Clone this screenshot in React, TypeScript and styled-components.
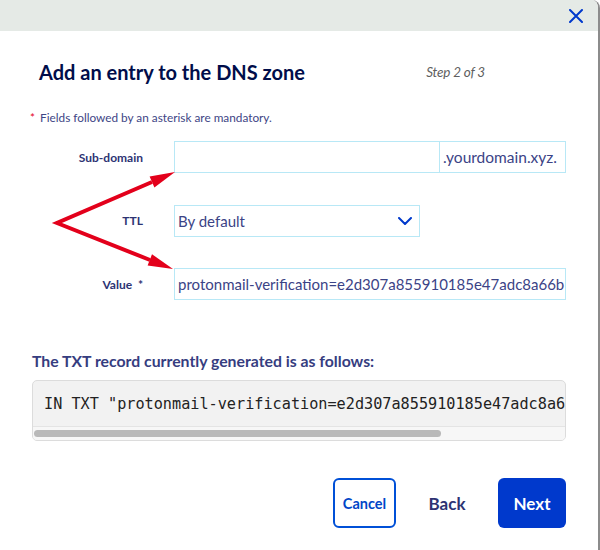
import { FC } from 'react'
import styled, { createGlobalStyle } from 'styled-components'

const GlobalStyle = createGlobalStyle`
  html, body {
    margin: 0;
    padding: 0;
    background: #ffffff;
  }
  body {
    font-family: Lato, 'Open Sans', sans-serif;
  }
`

const navy = '#2d3373'
const blue = '#0039cc'
const fieldBorder = '#b8e8f6'

const Page = styled.div`
  position: relative;
  width: 600px;
  height: 550px;
  overflow: hidden;
`

const Dialog = styled.div`
  box-sizing: border-box;
  width: 600px;
  height: 550px;
  border-right: 2px solid #8c8c8c;
  border-top-right-radius: 8px;
  background: #fff;
  overflow: hidden;
  display: flex;
  flex-direction: column;
`

const Header = styled.div`
  height: 31px;
  background: #e5eae6;
  display: flex;
  justify-content: flex-end;
  align-items: center;
  padding-right: 13px;
`

const CloseButton = styled.button`
  border: 0;
  background: none;
  padding: 0;
  width: 18px;
  height: 18px;
  display: flex;
  align-items: center;
  justify-content: center;
  cursor: pointer;
`

const Body = styled.div`
  padding: 29px 32px 0 32px;
  display: flex;
  flex-direction: column;
`

const TitleRow = styled.div`
  display: flex;
  justify-content: space-between;
  align-items: center;
  padding: 0 81px 0 7px;
  height: 24px;

  h1 {
    margin: 0;
    font-size: 20px;
    font-weight: 700;
    color: #000d4a;
  }
  span {
    font-size: 13.5px;
    font-style: italic;
    color: #5f5f5f;
    letter-spacing: -0.2px;
  }
`

const Mandatory = styled.p`
  margin: 27px 0 0 -2px;
  font-size: 11.8px;
  line-height: 14px;
  color: #3e4585;

  em {
    font-style: normal;
    color: #e3001b;
    margin-right: 2px;
  }
`

const Form = styled.div`
  margin-top: 16px;
  margin-left: -32px;
  display: grid;
  grid-template-columns: 143px 1fr;
  column-gap: 31px;
  row-gap: 31.5px;
  align-items: center;
`

const Label = styled.label`
  text-align: right;
  font-size: 12px;
  font-weight: 700;
  color: ${navy};
`

const Field = styled.div<{ $width?: number }>`
  box-sizing: border-box;
  height: 32px;
  width: ${(p) => (p.$width ? `${p.$width}px` : '100%')};
  border: 1px solid ${fieldBorder};
  display: flex;
  align-items: stretch;
  overflow: hidden;
  font-size: 15px;
  color: #3b4386;
`

const FieldText = styled.div`
  flex: 1;
  min-width: 0;
  display: flex;
  align-items: center;
  padding-left: 3px;
  white-space: nowrap;
  overflow: hidden;
`

const Suffix = styled.div`
  width: 126px;
  border-left: 1px solid ${fieldBorder};
  display: flex;
  align-items: center;
  padding-left: 3px;
  box-sizing: border-box;
  font-size: 15.5px;
  color: #3b4386;
`

const Chevron = styled.div`
  width: 14px;
  display: flex;
  align-items: center;
  justify-content: center;
  margin-right: 7px;
`

const TxtHeading = styled.h2`
  margin: 52px 0 0 0;
  font-size: 15.8px;
  line-height: 18px;
  font-weight: 700;
  color: #363d80;
`

const CodeBox = styled.div`
  box-sizing: border-box;
  margin-top: 10px;
  height: 61px;
  border: 1px solid #dcdcdc;
  border-radius: 5px;
  background: #f2f2f2;
  overflow: hidden;
  display: flex;
  flex-direction: column;
`

const Code = styled.pre`
  margin: 0;
  padding: 13px 0 0 11px;
  height: 45px;
  box-sizing: border-box;
  font-family: 'DejaVu Sans Mono', monospace;
  font-size: 15.2px;
  line-height: 20px;
  color: #222;
  white-space: nowrap;
  overflow: hidden;
`

const ScrollTrack = styled.div`
  flex: 1;
  border-top: 1px solid #e4e4e4;
  background: #f7f7f7;
  padding: 3px 1px;
  box-sizing: border-box;
`

const ScrollThumb = styled.div`
  height: 7px;
  border-radius: 4px;
  background: #b9b9b9;
`

const Actions = styled.div`
  margin-top: 37px;
  display: flex;
  justify-content: flex-end;
  align-items: center;
`

const Button = styled.button<{ $variant: 'outline' | 'ghost' | 'primary' }>`
  box-sizing: border-box;
  height: 50px;
  border-radius: 6px;
  font-family: inherit;
  font-weight: 700;
  cursor: pointer;
  ${(p) =>
    p.$variant === 'outline'
      ? `
    width: 63px;
    border: 2px solid #0050d7;
    background: #fff;
    color: #0046c8;
    font-size: 14.5px;
  `
      : p.$variant === 'ghost'
      ? `
    width: 102px;
    border: 0;
    background: none;
    color: ${navy};
    font-size: 17px;
  `
      : `
    width: 68px;
    border: 0;
    background: ${blue};
    color: #fff;
    font-size: 17px;
  `}
`

const Annotation = styled.svg`
  position: absolute;
  left: 0;
  top: 0;
  pointer-events: none;
`

const App: FC = () => {
  return (
    <Page>
      <GlobalStyle />
      <Dialog>
        <Header>
          <CloseButton aria-label="Close">
            <svg width="14" height="14" viewBox="0 0 14 14">
              <path
                d="M1 1 L13 13 M13 1 L1 13"
                stroke={blue}
                strokeWidth="2"
                strokeLinecap="round"
              />
            </svg>
          </CloseButton>
        </Header>
        <Body>
          <TitleRow>
            <h1>Add an entry to the DNS zone</h1>
            <span>Step 2 of 3</span>
          </TitleRow>
          <Mandatory>
            <em>*</em> Fields followed by an asterisk are mandatory.
          </Mandatory>
          <Form>
            <Label>Sub-domain</Label>
            <Field>
              <FieldText />
              <Suffix>.yourdomain.xyz.</Suffix>
            </Field>
            <Label>TTL</Label>
            <Field $width={246}>
              <FieldText>By default</FieldText>
              <Chevron>
                <svg width="14" height="8" viewBox="0 0 14 8">
                  <path
                    d="M1 1 L7 7 L13 1"
                    stroke={blue}
                    strokeWidth="2"
                    fill="none"
                    strokeLinecap="round"
                    strokeLinejoin="round"
                  />
                </svg>
              </Chevron>
            </Field>
            <Label>Value&nbsp; *</Label>
            <Field>
              <FieldText>protonmail-verification=e2d307a855910185e47adc8a66b</FieldText>
            </Field>
          </Form>
          <TxtHeading>The TXT record currently generated is as follows:</TxtHeading>
          <CodeBox>
            <Code>IN TXT "protonmail-verification=e2d307a855910185e47adc8a6</Code>
            <ScrollTrack>
              <ScrollThumb style={{ width: 407 }} />
            </ScrollTrack>
          </CodeBox>
          <Actions>
            <Button $variant="outline">Cancel</Button>
            <Button $variant="ghost">Back</Button>
            <Button $variant="primary">Next</Button>
          </Actions>
        </Body>
      </Dialog>
      <Annotation width="600" height="550" viewBox="0 0 600 550">
        <polyline
          points="152,182 57,223 150,260"
          stroke="#e3001b"
          strokeWidth="4"
          fill="none"
          strokeLinejoin="miter"
        />
        <polygon points="175,172 154.4,187.4 149.6,176.4" fill="#e3001b" />
        <polygon points="173,269 147.6,265.4 152,254.2" fill="#e3001b" />
      </Annotation>
    </Page>
  )
}

export default App
